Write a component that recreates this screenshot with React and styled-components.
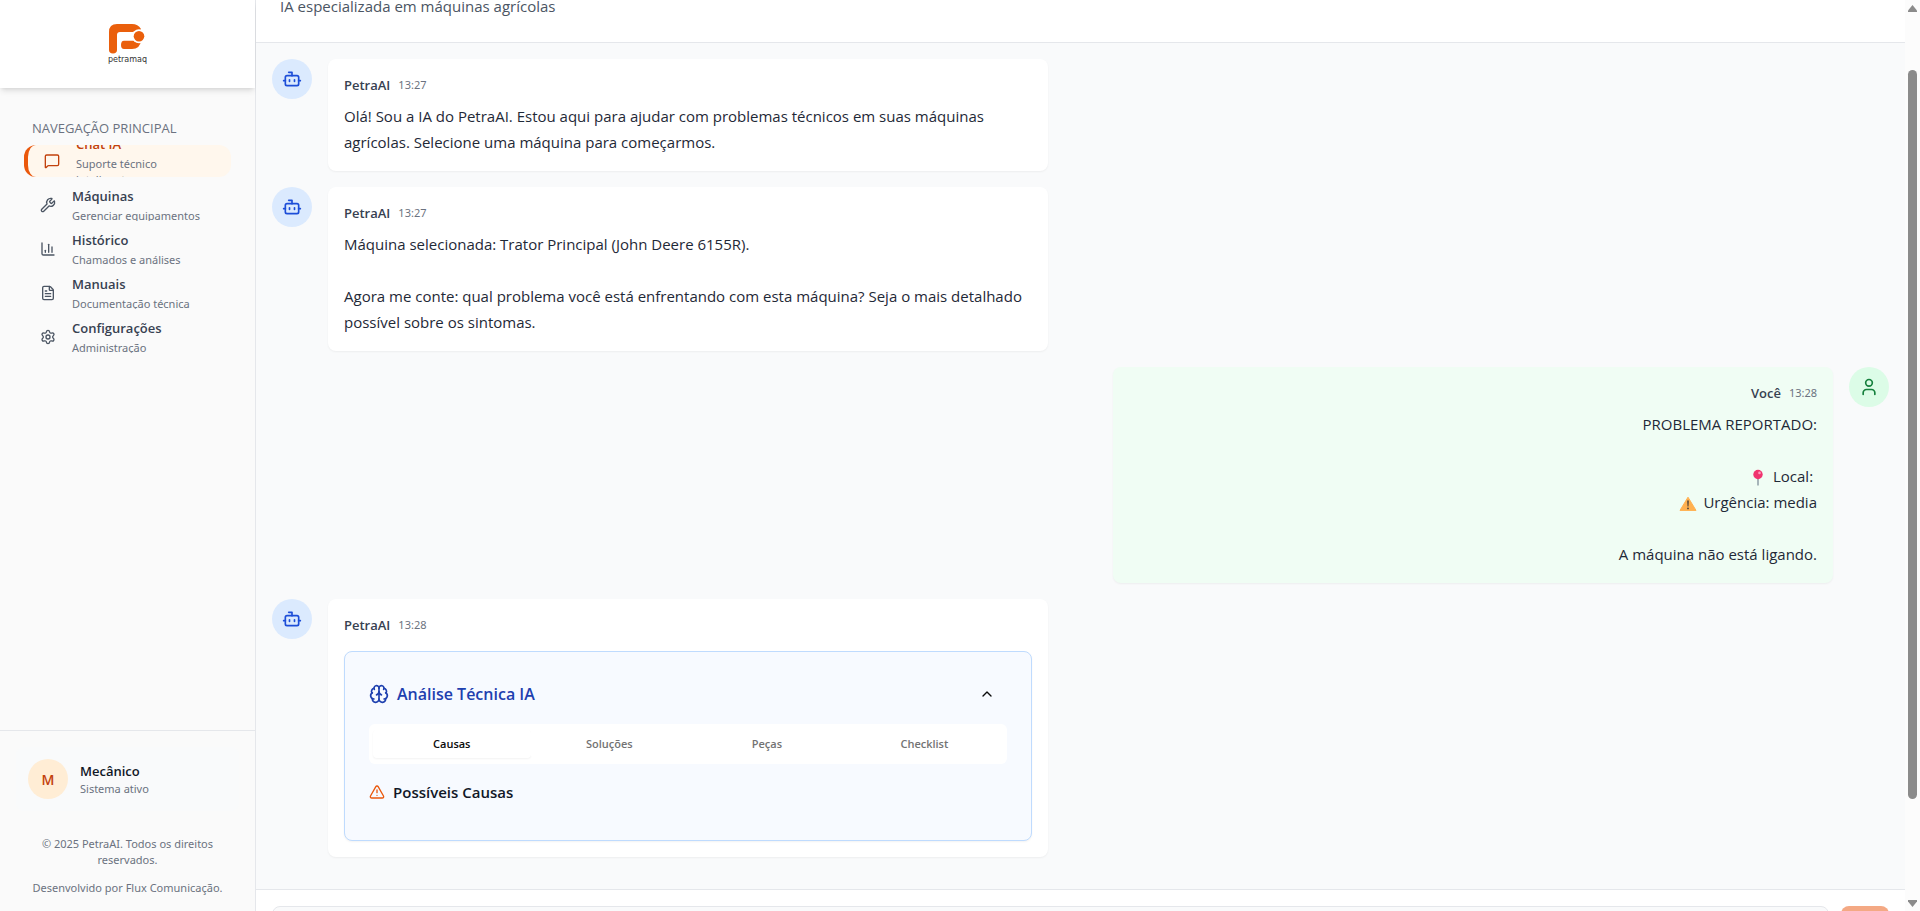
import React, { useState } from "react";
import styled, { createGlobalStyle } from "styled-components";
import {
  Bot,
  Brain,
  ChartColumn,
  ChevronUp,
  FileText,
  MessageSquare,
  Settings,
  TriangleAlert,
  User,
  Wrench,
} from "lucide-react";

const navItems = [
  { title: "Chat IA", description: "Suporte técnico inteligente", icon: MessageSquare, active: true },
  { title: "Máquinas", description: "Gerenciar equipamentos", icon: Wrench },
  { title: "Histórico", description: "Chamados e análises", icon: ChartColumn },
  { title: "Manuais", description: "Documentação técnica", icon: FileText },
  { title: "Configurações", description: "Administração", icon: Settings },
];

const messages = [
  {
    author: "PetraAI",
    time: "13:27",
    text: "Olá! Sou a IA do PetraAI. Estou aqui para ajudar com problemas técnicos em suas máquinas agrícolas. Selecione uma máquina para começarmos.",
  },
  {
    author: "PetraAI",
    time: "13:27",
    text: "Máquina selecionada: Trator Principal (John Deere 6155R).\n\nAgora me conte: qual problema você está enfrentando com esta máquina? Seja o mais detalhado possível sobre os sintomas.",
  },
  {
    author: "Você",
    time: "13:28",
    own: true,
    lines: [
      { text: "PROBLEMA REPORTADO:" },
      { text: "" },
      { text: "Local:\u00a0", icon: "pin" },
      { text: "Urgência: media", icon: "warning" },
      { text: "" },
      { text: "A máquina não está ligando." },
    ],
  },
  { author: "PetraAI", time: "13:28", analysis: true },
];

const tabs = ["Causas", "Soluções", "Peças", "Checklist"];

const Logo = () => (
  <LogoBox>
    <svg width="38" height="34" viewBox="0 0 38 34" aria-hidden="true">
      <path
        d="M1 30V12Q1 4 9 4H24Q30 4 33 9L31 12H12Q9 12 9 15V30Q9 33.4 5 33.4Q1 33.4 1 30Z"
        fill="#ea5f0c"
      />
      <path d="M16 20.7H33Q32 29 24 29H16Q13 29 13 25Q13 20.7 16 20.7Z" fill="#ea5f0c" />
      <circle cx="31" cy="16.3" r="7" fill="#fff" />
      <circle cx="31" cy="16.3" r="5.3" fill="#ea5f0c" />
    </svg>
    <LogoName>petramaq</LogoName>
  </LogoBox>
);

const Pin = () => (
  <Emoji width="18" height="18" viewBox="0 0 18 18" aria-hidden="true">
    <path d="M8.3 9h1.4v7l-.7 1-.7-1z" fill="#8796a0" />
    <circle cx="9" cy="5.5" r="4.7" fill="#f0346f" />
    <circle cx="10.5" cy="3.9" r="1.3" fill="#ff9cbc" />
  </Emoji>
);

const Warning = () => (
  <Emoji width="18" height="18" viewBox="0 0 18 18" aria-hidden="true">
    <path d="M9 2.2 17 15.4H1Z" fill="#ffb04f" stroke="#ffb04f" strokeWidth="1" strokeLinejoin="round" />
    <path d="M8.2 5.5h1.6l-.3 6h-1z" fill="#4a4038" />
    <circle cx="9" cy="13.4" r="0.9" fill="#4a4038" />
  </Emoji>
);

const Analysis = () => {
  const [open, setOpen] = useState(true);
  const [tab, setTab] = useState("Causas");

  return (
    <AnalysisCard>
      <AnalysisHeader>
        <AnalysisTitle>
          <Brain size={20} />
          Análise Técnica IA
        </AnalysisTitle>
        <ToggleButton type="button" aria-label="Recolher análise" onClick={() => setOpen(!open)}>
          <ChevronUp size={16} />
        </ToggleButton>
      </AnalysisHeader>
      {open && (
        <>
          <TabList role="tablist">
            {tabs.map((name) => (
              <Tab
                key={name}
                type="button"
                role="tab"
                aria-selected={tab === name}
                $active={tab === name}
                onClick={() => setTab(name)}
              >
                {name}
              </Tab>
            ))}
          </TabList>
          <SectionTitle>
            <TriangleAlert size={16} color="#ea580c" />
            Possíveis Causas
          </SectionTitle>
        </>
      )}
    </AnalysisCard>
  );
};

const Message = ({ message }) => (
  <MessageRow $own={message.own}>
    <Avatar $own={message.own}>{message.own ? <User size={20} /> : <Bot size={20} />}</Avatar>
    <Bubble $own={message.own}>
      <MessageMeta $own={message.own}>
        <Author>{message.author}</Author>
        <Time>{message.time}</Time>
      </MessageMeta>
      {message.text && <MessageText>{message.text}</MessageText>}
      {message.lines && (
        <MessageText>
          {message.lines.map((line, index) => (
            <Line key={index}>
              {line.icon === "pin" && <Pin />}
              {line.icon === "warning" && <Warning />}
              {line.text}
            </Line>
          ))}
        </MessageText>
      )}
      {message.analysis && <Analysis />}
    </Bubble>
  </MessageRow>
);

const App = () => {
  return (
    <Layout>
      <GlobalStyle />
      <Sidebar>
        <SidebarHeader>
          <Logo />
        </SidebarHeader>
        <Nav>
          <NavLabel>Navegação Principal</NavLabel>
          <NavList>
            {navItems.map(({ title, description, icon: Icon, active }) => (
              <li key={title}>
                <NavLink href="#" $active={active}>
                  <Icon size={16} />
                  <NavText>
                    <NavTitle $active={active}>{title}</NavTitle>
                    <NavDescription>{description}</NavDescription>
                  </NavText>
                </NavLink>
              </li>
            ))}
          </NavList>
        </Nav>
        <SidebarFooter>
          <UserCard>
            <UserInitial>M</UserInitial>
            <div>
              <UserName>Mecânico</UserName>
              <UserStatus>Sistema ativo</UserStatus>
            </div>
          </UserCard>
          <Credits>
            <p>© 2025 PetraAI. Todos os direitos reservados.</p>
            <p>Desenvolvido por Flux Comunicação.</p>
          </Credits>
        </SidebarFooter>
      </Sidebar>

      <Main>
        <PageHeader>
          <Subtitle>IA especializada em máquinas agrícolas</Subtitle>
        </PageHeader>
        <Chat>
          {messages.map((message, index) => (
            <Message key={index} message={message} />
          ))}
        </Chat>
        <Composer>
          <MessageInput aria-label="Mensagem" />
          <SendButton type="button" aria-label="Enviar" disabled />
        </Composer>
      </Main>

      <ScrollRail aria-hidden="true">
        <svg width="9" height="7" viewBox="0 0 9 7">
          <path d="M4.5 0 9 5.5V7H0V5.5Z" fill="#8b8b8b" />
        </svg>
        <ScrollTrack>
          <ScrollThumb />
        </ScrollTrack>
        <svg width="9" height="7" viewBox="0 0 9 7">
          <path d="M4.5 7 9 1.5V0H0V1.5Z" fill="#8b8b8b" />
        </svg>
      </ScrollRail>
    </Layout>
  );
};

export default App;

// Styled Components
const smallFont = `"Noto Sans", "Open Sans", sans-serif`;

const GlobalStyle = createGlobalStyle`
  * {
    box-sizing: border-box;
    margin: 0;
    padding: 0;
  }

  body {
    font-family: "Open Sans", "Noto Sans", sans-serif;
    color: #1f2937;
    background: #f9fafb;
  }

  button, textarea {
    font-family: inherit;
  }
`;

const Layout = styled.div`
  display: flex;
  height: 100vh;
  overflow: hidden;
`;

const Sidebar = styled.aside`
  display: flex;
  flex-direction: column;
  flex: 0 0 256px;
  border-right: 1px solid #e5e7eb;
  background: #fafafa;
`;

const SidebarHeader = styled.div`
  display: flex;
  justify-content: center;
  padding: 20px 16px;
  background: #fff;
  box-shadow: 0 4px 6px -1px rgba(0, 0, 0, 0.1), 0 2px 4px -2px rgba(0, 0, 0, 0.1);
`;

const LogoBox = styled.div`
  display: flex;
  flex-direction: column;
  align-items: center;
  height: 48px;
`;

const LogoName = styled.span`
  font-family: "DejaVu Sans", sans-serif;
  font-size: 8px;
  line-height: 12px;
  color: #333;
`;

const Nav = styled.nav`
  flex: 1;
  padding: 32px 24px;
`;

const NavLabel = styled.h2`
  padding: 0 8px;
  font-size: 13px;
  font-weight: 500;
  line-height: 17px;
  margin-bottom: 8px;
  text-transform: uppercase;
  color: #6b7280;
`;

const NavList = styled.ul`
  display: flex;
  flex-direction: column;
  gap: 12px;
  list-style: none;
`;

const NavLink = styled.a`
  display: flex;
  align-items: center;
  gap: 16px;
  height: 32px;
  padding: 0 16px;
  overflow: hidden;
  border-left: ${({ $active }) => ($active ? "4px solid #ea580c" : "none")};
  border-radius: 12px;
  background: ${({ $active }) => ($active ? "#fff7ed" : "transparent")};
  color: ${({ $active }) => ($active ? "#c2410c" : "#4b5563")};
  text-decoration: none;

  svg {
    flex-shrink: 0;
  }
`;

const NavText = styled.div`
  display: flex;
  flex-direction: column;
  gap: 2px;
`;

const NavTitle = styled.span`
  font-size: 13px;
  font-weight: 600;
  line-height: 20px;
  color: ${({ $active }) => ($active ? "#c2410c" : "#374151")};
`;

const NavDescription = styled.span`
  font-family: ${smallFont};
  font-size: 11px;
  line-height: 16px;
  color: #6b7280;
`;

const SidebarFooter = styled.div`
  padding: 16px 16px 15px;
  border-top: 1px solid #e5e7eb;
`;

const UserCard = styled.div`
  display: flex;
  align-items: center;
  gap: 12px;
  padding: 12px;
  border-radius: 8px;
  background: #f9fafb;
`;

const UserInitial = styled.div`
  display: flex;
  align-items: center;
  justify-content: center;
  width: 40px;
  height: 40px;
  border-radius: 50%;
  background: #ffedd5;
  color: #c2410c;
  font-size: 14px;
  font-weight: 600;
`;

const UserName = styled.p`
  font-size: 13px;
  font-weight: 600;
  line-height: 20px;
  color: #111827;
`;

const UserStatus = styled.p`
  font-family: ${smallFont};
  font-size: 11px;
  line-height: 16px;
  color: #6b7280;
`;

const Credits = styled.div`
  display: flex;
  flex-direction: column;
  gap: 12px;
  margin-top: 25px;
  padding: 0 8px;
  font-family: ${smallFont};
  font-size: 11px;
  line-height: 16px;
  text-align: center;
  color: #6b7280;
`;

const Main = styled.main`
  display: flex;
  flex-direction: column;
  flex: 1;
  min-width: 0;
`;

const PageHeader = styled.header`
  display: flex;
  flex-direction: column;
  justify-content: flex-end;
  height: 43px;
  padding: 0 24px 24px;
  overflow: hidden;
  border-bottom: 1px solid #e5e7eb;
  background: #fff;
`;

const Subtitle = styled.p`
  flex-shrink: 0;
  font-size: 15px;
  line-height: 24px;
  color: #4b5563;
`;

const Chat = styled.section`
  display: flex;
  flex-direction: column;
  gap: 16px;
  flex: 1;
  padding: 16px;
  background: #f9fafb;
`;

const MessageRow = styled.article`
  display: flex;
  flex-direction: ${({ $own }) => ($own ? "row-reverse" : "row")};
  align-self: ${({ $own }) => ($own ? "flex-end" : "flex-start")};
  align-items: flex-start;
  gap: 16px;
  width: 48%;
`;

const Avatar = styled.div`
  display: flex;
  align-items: center;
  justify-content: center;
  flex: 0 0 40px;
  height: 40px;
  border-radius: 50%;
  background: ${({ $own }) => ($own ? "#dcfce7" : "#dbeafe")};
  color: ${({ $own }) => ($own ? "#15803d" : "#1d4ed8")};
`;

const Bubble = styled.div`
  flex: 1;
  min-width: 0;
  padding: 16px;
  border-radius: 8px;
  background: ${({ $own }) => ($own ? "#f0fdf4" : "#fff")};
  text-align: ${({ $own }) => ($own ? "right" : "left")};
  box-shadow: 0 1px 2px rgba(0, 0, 0, 0.05);
`;

const MessageMeta = styled.div`
  display: flex;
  align-items: center;
  justify-content: ${({ $own }) => ($own ? "flex-end" : "flex-start")};
  gap: 8px;
  margin-bottom: 8px;
  line-height: 20px;
`;

const Author = styled.span`
  font-size: 13px;
  font-weight: 600;
  color: #374151;
`;

const Time = styled.span`
  font-family: ${smallFont};
  font-size: 11px;
  color: #6b7280;
`;

const MessageText = styled.div`
  font-size: 15px;
  line-height: 26px;
  white-space: pre-wrap;
  color: #1f2937;
`;

const Line = styled.p`
  min-height: 26px;
`;

const Emoji = styled.svg`
  margin-right: 6px;
  vertical-align: middle;
`;

const AnalysisCard = styled.div`
  margin-top: 16px;
  padding: 24px 24px 36px;
  border: 1px solid #bfdbfe;
  border-radius: 8px;
  background: #f7faff;
  box-shadow: 0 1px 2px rgba(0, 0, 0, 0.05);
`;

const AnalysisHeader = styled.div`
  display: flex;
  align-items: center;
  justify-content: space-between;
  margin-bottom: 12px;
`;

const AnalysisTitle = styled.h3`
  display: flex;
  align-items: center;
  gap: 8px;
  font-size: 16px;
  font-weight: 600;
  line-height: 28px;
  color: #1e40af;
`;

const ToggleButton = styled.button`
  display: flex;
  align-items: center;
  height: 36px;
  padding: 0 12px;
  border: none;
  border-radius: 6px;
  background: transparent;
  color: #0a0a0a;
  cursor: pointer;
`;

const TabList = styled.div`
  display: grid;
  grid-template-columns: repeat(4, 1fr);
  align-items: center;
  height: 40px;
  padding: 4px;
  margin-bottom: 16px;
  border-radius: 6px;
  background: #fff;
`;

const Tab = styled.button`
  padding: 6px 12px;
  border: none;
  border-radius: 4px;
  background: #fff;
  font-size: 11px;
  font-weight: 600;
  line-height: 16px;
  color: ${({ $active }) => ($active ? "#0a0a0a" : "#737373")};
  box-shadow: ${({ $active }) => ($active ? "0 1px 2px rgba(0, 0, 0, 0.05)" : "none")};
  cursor: pointer;
`;

const SectionTitle = styled.h4`
  display: flex;
  align-items: center;
  gap: 8px;
  font-size: 15px;
  font-weight: 600;
  line-height: 24px;
  color: #111827;
`;

const Composer = styled.form`
  display: flex;
  gap: 12px;
  height: 22px;
  padding: 16px 16px 0;
  overflow: hidden;
  border-top: 1px solid #e5e7eb;
  background: #fff;
`;

const MessageInput = styled.textarea`
  flex: 1;
  height: 48px;
  padding: 12px;
  border: 1px solid #e5e7eb;
  border-radius: 8px;
  background: #f9fafb;
  resize: none;
`;

const SendButton = styled.button`
  flex: 0 0 48px;
  height: 48px;
  border: none;
  border-radius: 8px;
  background: #f4a984;
`;

const ScrollRail = styled.div`
  display: flex;
  flex-direction: column;
  align-items: center;
  flex: 0 0 15px;
  padding: 5px 0 4px;
  background: #fcfcfc;
`;

const ScrollTrack = styled.div`
  flex: 1;
  width: 9px;
  padding: 58px 0 101px;
`;

const ScrollThumb = styled.div`
  height: 100%;
  border-radius: 5px;
  background: #8b8b8b;
`;
